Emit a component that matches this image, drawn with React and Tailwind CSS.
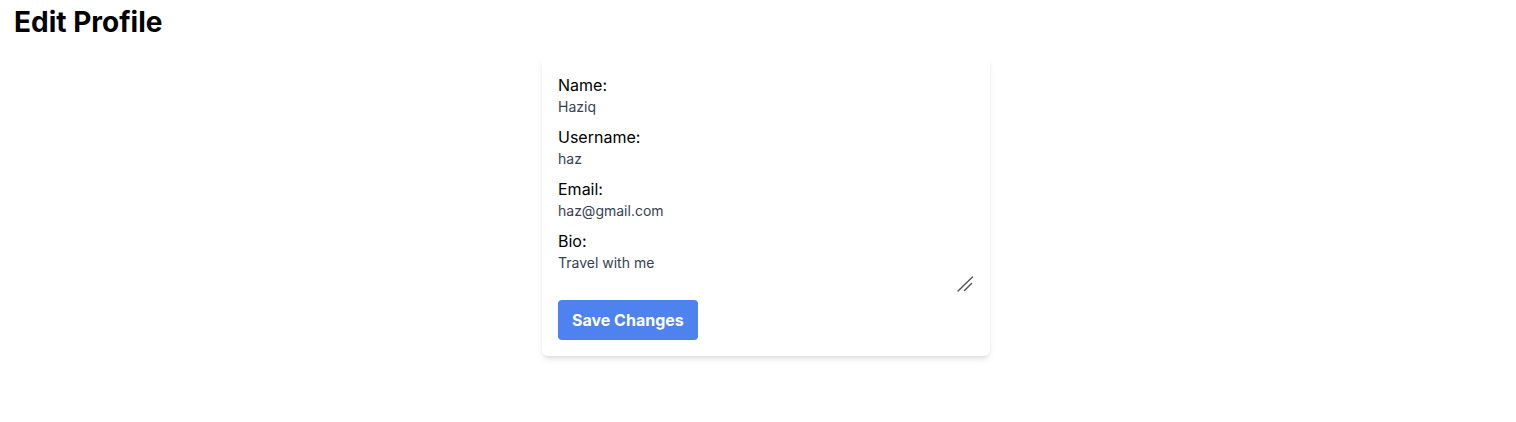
export default function App() {
  const font = { fontFamily: "Inter, 'Liberation Sans', sans-serif" };
  return (
    <div className="min-h-screen bg-white text-black" style={font}>
      <h1 className="text-[28px] font-bold pl-[14px] pt-[6px] leading-8">Edit Profile</h1>
      <div className="pl-4">
        <div className="mx-auto mt-[19px] w-[448px] bg-white rounded-md shadow-md p-4">
          <div className="flex flex-col">
            <div className="mb-2 flex flex-col">
              <label className="text-base leading-6">Name:</label>
              <input className="text-sm leading-5 text-gray-700 outline-none" defaultValue="Haziq" />
            </div>
            <div className="mb-2 flex flex-col">
              <label className="text-base leading-6">Username:</label>
              <input className="text-sm leading-5 text-gray-700 outline-none" defaultValue="haz" />
            </div>
            <div className="mb-2 flex flex-col">
              <label className="text-base leading-6">Email:</label>
              <input className="text-sm leading-5 text-gray-700 outline-none" defaultValue="haz@gmail.com" />
            </div>
            <div className="mb-2 flex flex-col">
              <label className="text-base leading-6">Bio:</label>
              <div className="relative">
                <textarea rows={2} className="block w-full resize-none text-sm leading-5 text-gray-700 outline-none h-[39px]" defaultValue="Travel with me" />
                <svg className="absolute right-0 bottom-0 pointer-events-none" width="17" height="16" viewBox="0 0 17 16">
                  <line x1="15.5" y1="1" x2="1" y2="15" stroke="#555" strokeWidth="1.4" strokeLinecap="round" />
                  <line x1="14.5" y1="7.5" x2="7.5" y2="14.5" stroke="#555" strokeWidth="1.4" strokeLinecap="round" />
                </svg>
              </div>
            </div>
            <div>
              <button className="bg-[#4e82ee] text-white font-bold px-[14px] py-2 rounded text-base leading-6">Save Changes</button>
            </div>
          </div>
        </div>
      </div>
    </div>
  );
}
